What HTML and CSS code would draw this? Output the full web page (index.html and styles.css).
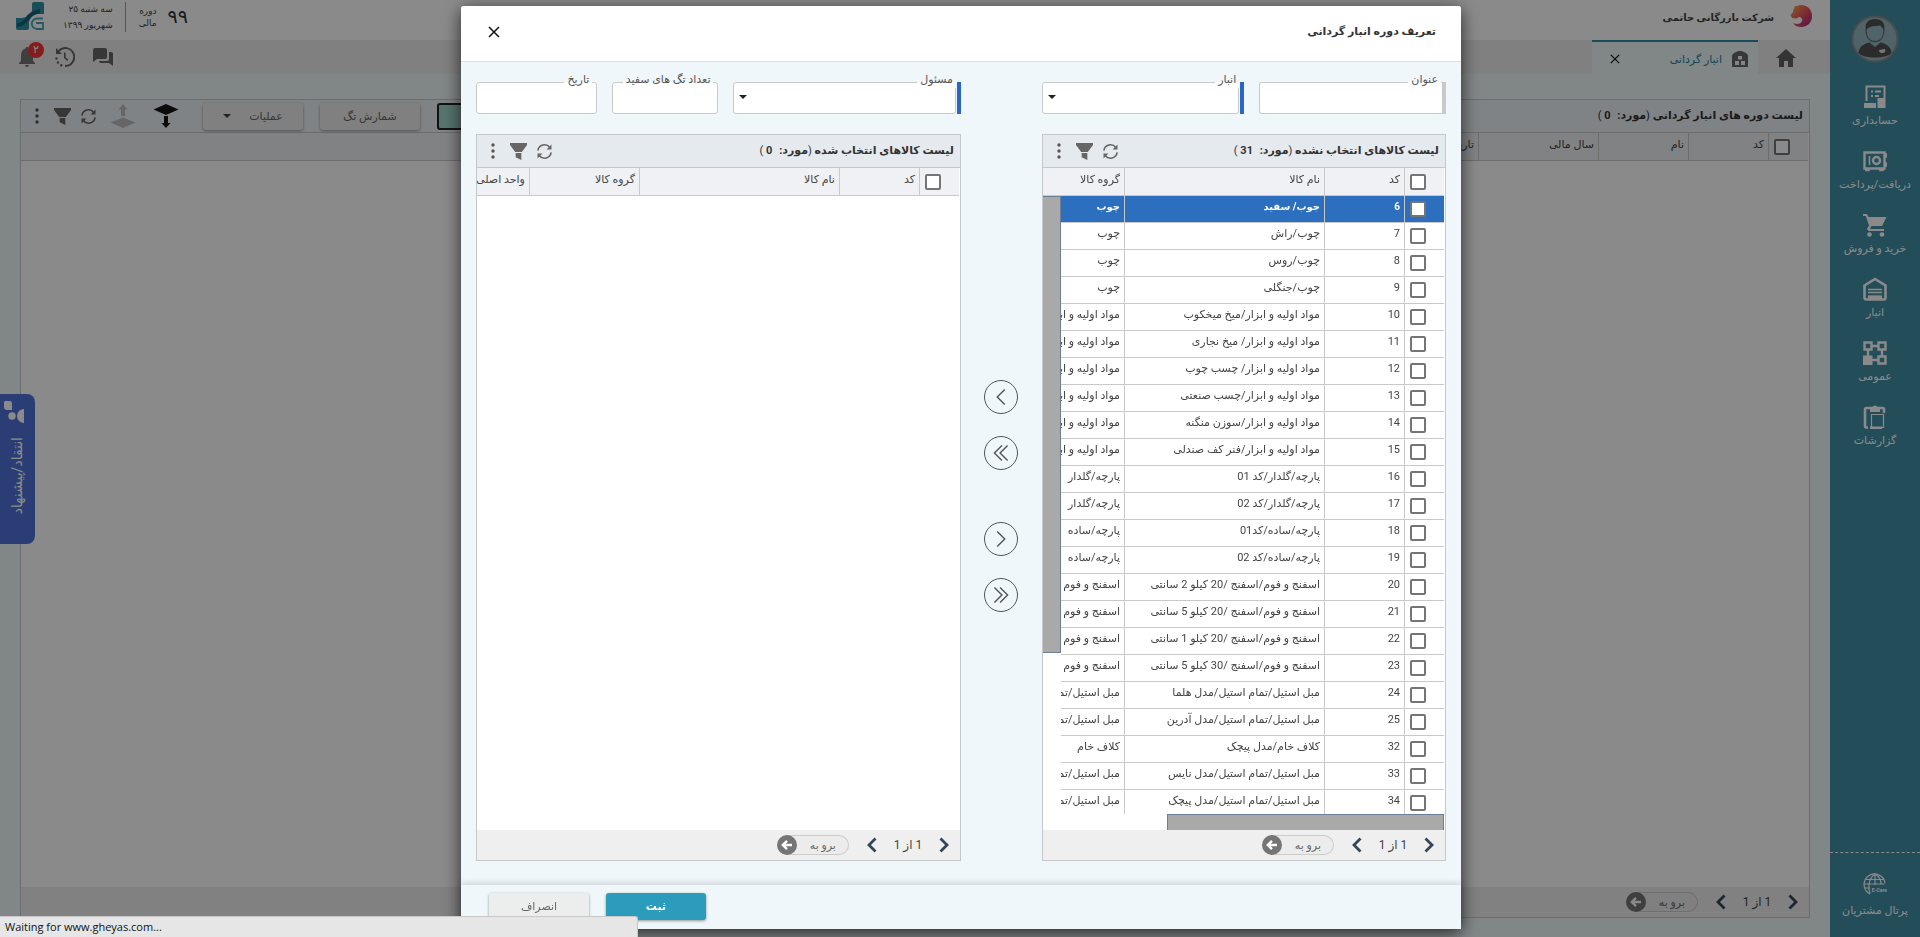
FILE: index.html
```html
<!DOCTYPE html>
<html lang="fa" dir="rtl">
<head>
<meta charset="utf-8">
<title>انبار گردانی</title>
<link rel="stylesheet" href="styles.css">
</head>
<body>
<svg class="defs" aria-hidden="true">
  <symbol id="close" viewBox="0 0 12 12"><path d="M1 1l10 10M11 1L1 11" fill="none" stroke="currentColor" stroke-width="1.5"/></symbol>
  <symbol id="refresh" viewBox="0 0 18 18"><path d="M2 8a7 7 0 0 1 12.6-3.2M16 10a7 7 0 0 1-12.6 3.2" fill="none" stroke="currentColor" stroke-width="1.7"/><path d="M16.4 1.6v5.2h-5.2zM1.6 16.4v-5.2h5.2z" fill="currentColor"/></symbol>
  <symbol id="funnel" viewBox="0 0 18 18"><path d="M0 0h18v2.200L12.500 9.500h-7L0 2.200zM6 10.500h6V18l-6-3z" fill="currentColor"/></symbol>
  <symbol id="dots" viewBox="0 0 4 18"><circle cx="2" cy="3" r="1.700"/><circle cx="2" cy="9" r="1.700"/><circle cx="2" cy="15" r="1.700"/></symbol>
  <symbol id="next" viewBox="0 0 10 16"><path d="M1.500 1.500L8 8l-6.500 6.500" fill="none" stroke="currentColor" stroke-width="2.800"/></symbol>
  <symbol id="prev" viewBox="0 0 10 16"><path d="M8.500 1.500L2 8l6.500 6.500" fill="none" stroke="currentColor" stroke-width="2.800"/></symbol>
  <symbol id="go" viewBox="0 0 20 20"><circle cx="10" cy="10" r="10" fill="#757575"/><path d="M15 10H6.500M10 5.800L5.800 10l4.200 4.200" fill="none" stroke="#fff" stroke-width="2.400"/></symbol>
  <symbol id="export" viewBox="0 0 26 26"><path d="M13 1l12.500 5.500L13 12 .5 6.500zM11 13h4v7h2.500L13 25l-4.500-5H11z" fill="currentColor"/></symbol>
  <symbol id="import" viewBox="0 0 26 26"><path d="M13 14.500l12.500 5L13 25 .5 19.500zM13 1l4.500 5.500H15V13h-4V6.500H8.500z" fill="currentColor"/></symbol>
</svg>

<div class="app">
  <nav class="sidebar">
    <svg class="avatar" viewBox="0 0 48 48"><circle cx="24" cy="24" r="22.500" fill="#94b8c0" stroke="#8c8c8c" stroke-width="2"/><path d="M7.500 38c1-7 5-9 11-10.500l5.500 4.500 5.500-4.500c6 1.500 10 3.500 11 10.500-3 3-9 4.500-16.500 4.500S10.500 41 7.500 38z" fill="#505050"/><path d="M15 14c0 8 3.500 12.500 9 12.500S33 22 33 14" fill="none" stroke="#6b6b6b" stroke-width="1.300"/><path d="M15 15c-1.500-7 2-11 9-11s10.500 4 9 11c-1.500-1-2-3.500-4-4.500-5 1-10-.5-14 4.500z" fill="#505050"/><path d="M28 35l6-1c1 3-1 4-3 4s-3-1-3-3z" fill="#ddd"/></svg>
    <a class="nav-item" href="#"><svg viewBox="0 0 24 24"><path d="M3.500 16V1.500h18V13M8 6.500h2m2 0h6M8 11h2m2 0h4" fill="none" stroke="currentColor" stroke-width="2"/><path d="M1 18h12v5H1zM14.500 13h8v10h-8z" fill="currentColor"/></svg>حسابداری</a>
    <a class="nav-item" href="#"><svg viewBox="0 0 24 24"><path d="M1.500 3.500h20v16h-20z" fill="none" stroke="currentColor" stroke-width="2.400"/><path d="M6.500 7v9M22 5h1.500v3H22zM22 14h1.500v3H22zM3 20h3v1.500H3zM17 20h3v1.500h-3z" fill="currentColor" stroke="currentColor" stroke-width="1.600"/><circle cx="13.500" cy="11.500" r="3.500" fill="none" stroke="currentColor" stroke-width="2.400"/></svg>دریافت/پرداخت</a>
    <a class="nav-item" href="#"><svg viewBox="0 0 24 24"><path d="M0 1h4l1.500 3H23.500L19 13H8.500L7 16h14v2H5.500L4 16l2-3.500L2.800 3H0z" fill="currentColor"/><circle cx="6.500" cy="21.500" r="2.300" fill="currentColor"/><circle cx="19" cy="21.500" r="2.300" fill="currentColor"/></svg>خرید و فروش</a>
    <a class="nav-item" href="#"><svg viewBox="0 0 24 24"><path d="M1.500 8.500L12 2l10.500 6.500v12a2 2 0 0 1-2 2h-17a2 2 0 0 1-2-2z" fill="none" stroke="currentColor" stroke-width="2.600"/><path d="M5 12.500h14M5 15.500h14M5 19.500h14" fill="none" stroke="currentColor" stroke-width="1.600"/><path d="M5 18.500h14V23H5z" fill="currentColor"/></svg>انبار</a>
    <a class="nav-item" href="#"><svg viewBox="0 0 24 24"><path d="M1.500 1.500h7v7h-7zM15.500 1.500h7v7h-7zM15.500 15.500h7v7h-7zM9 5h6M5 9v6M19 9v6M9 19h6" fill="none" stroke="currentColor" stroke-width="2.400"/><path d="M0 14.500h9.500V24H0z" fill="currentColor"/></svg>عمومی</a>
    <a class="nav-item" href="#"><svg viewBox="0 0 24 24"><path d="M5 22.500H3.500a1.500 1.500 0 0 1-1.500-1.500V4.500a1.500 1.500 0 0 1 1.500-1.500h16a1.500 1.500 0 0 1 1.500 1.500V8" fill="none" stroke="currentColor" stroke-width="2.600"/><path d="M8.500 9.500h12v13h-12z" fill="none" stroke="currentColor" stroke-width="1.200"/><path d="M7 3h2.500a2.500 2.500 0 0 1 5 0H17v4H7zM7 21.500h12v2.500H7z" fill="currentColor"/></svg>گزارشات</a>
    <a class="nav-item portal" href="#"><svg viewBox="0 0 24 24"><g fill="none" stroke="currentColor" stroke-width="1.200"><path d="M7 21A10.500 10.500 0 1 1 22 10"/><path d="M1.500 11h20M3 6.500h18M12 1v11M12 1C5 6 5 15 7 21M12 1c5 3 6 7 6 10M1.500 15H7"/></g><text x="24" y="19" class="tiny">E-Care</text></svg>پرتال مشتریان</a>
  </nav>

  <div class="main">
    <header class="topbar">
      <svg class="company-logo" viewBox="0 0 22 24"><defs><linearGradient id="g1" x1="0" y1="0" x2="1" y2="1"><stop offset="0" stop-color="#f6b552"/><stop offset=".45" stop-color="#ec5b5b"/><stop offset="1" stop-color="#a0208a"/></linearGradient></defs><path d="M5 2c2 .5 3-1 6-1 7 0 11 5 11 11 0 7-5 11-11 11-3 0-6-1-8-4 4 2 8 1 9-2 1-2-1-4-3-4l-3 1.500-4-.5L.5 11 3 8c0-2 1-4 2-6z" fill="url(#g1)"/></svg>
      <strong class="company">شرکت بازرگانی حاتمی</strong>
      <div class="period"><span class="year">۹۹</span><span class="small">دوره<br>مالی</span></div>
      <div class="date">سه شنبه ۲۵<br>شهریور ۱۳۹۹</div>
      <svg class="brand" viewBox="0 0 28 28"><path d="M16 2a2 2 0 0 1 2-2h8a2 2 0 0 1 2 2v10h-6c-5 0-9 5-9 9v5a2 2 0 0 1-2 2H2a2 2 0 0 1-2-2V16h5c6 0 11-4 11-8z" fill="#2f93a6"/><path d="M1 23c5 0 8-3 10-6s7-7 13-8" fill="none" stroke="#1c6576" stroke-width="4"/><path d="M27 16.500h-6a5 5 0 0 0 0 10.500h6v-6h-7" fill="none" stroke="#4aa3b3" stroke-width="1.800"/></svg>
    </header>
    <div class="tabbar">
      <a class="tab home" href="#" aria-label="خانه"><svg viewBox="0 0 20 18"><path d="M10 0l10 9h-3v9h-5v-6H8v6H3V9H0z" fill="#606060"/></svg></a>
      <div class="tab active"><svg viewBox="0 0 18 18"><path d="M1 6c0-3 6-5 8-5s8 2 8 5v11H1z" fill="#666"/><path d="M7 6h4v3.500H7zM4 11h4v4H4zM10 11h4v4h-4z" fill="#eff7fa"/></svg><span>انبار گردانی</span><button type="button" class="icon-btn tab-close" aria-label="بستن"><svg viewBox="0 0 12 12"><use href="#close"/></svg></button></div>
      <div class="tools">
        <button type="button" class="icon-btn" aria-label="پیام ها"><svg class="i20" viewBox="0 0 20 20"><path d="M2 1h10a2 2 0 0 1 2 2v7a2 2 0 0 1-2 2H4l-4 3V3a2 2 0 0 1 2-2zM16 5h2a2 2 0 0 1 2 2v12l-4-3H8a2 2 0 0 1-2-2h8a2 2 0 0 0 2-2z" fill="#666"/></svg></button>
        <button type="button" class="icon-btn" aria-label="تاریخچه"><svg class="i20" viewBox="0 0 20 20"><path d="M3.500 4A9 9 0 1 1 10 19" fill="none" stroke="#666" stroke-width="2"/><path d="M1 1v6h6zM9 5.500h1.600v4.700l2.800 2.600-1 1.200L9 11z" fill="#666"/><g fill="#666"><circle cx="1.500" cy="11.500" r="1.200"/><circle cx="3" cy="15.500" r="1.200"/><circle cx="6.300" cy="18.300" r="1.200"/></g></svg></button>
        <button type="button" class="icon-btn bell" aria-label="اعلان ها"><svg class="i20" viewBox="0 0 20 20"><path d="M10 0c1 0 1.500.6 1.500 1.600C15 2.500 16 6 16 9v5l2 2v1H2v-1l2-2V9c0-3 1-6.500 4.500-7.400C8.500.6 9 0 10 0zM8 18h4a2 2 0 0 1-4 0z" fill="#757575"/></svg><span class="badge">۲</span></button>
      </div>
    </div>
    <main class="workspace">
      <section class="panel">
        <div class="panel-head">
          <h2>لیست دوره های انبار گردانی <span class="thin">(</span>مورد: <span class="count">0</span> <span class="thin">)</span></h2>
          <button type="button" class="btn primary-dim" aria-label="جدید"></button>
          <button type="button" class="btn">شمارش تگ</button>
          <button type="button" class="btn drop">عملیات</button>
          <button type="button" class="icon-btn dark" aria-label="دریافت"><svg class="i26" viewBox="0 0 26 26"><use href="#export"/></svg></button>
          <button type="button" class="icon-btn faint" aria-label="ارسال"><svg class="i26" viewBox="0 0 26 26"><use href="#import"/></svg></button>
          <div class="head-icons">
            <button type="button" class="icon-btn" aria-label="بازخوانی"><svg class="i18" viewBox="0 0 18 18"><use href="#refresh"/></svg></button>
            <button type="button" class="icon-btn" aria-label="فیلتر"><svg class="i18" viewBox="0 0 18 18"><use href="#funnel"/></svg></button>
            <button type="button" class="icon-btn" aria-label="بیشتر"><svg class="idots" viewBox="0 0 4 18"><use href="#dots"/></svg></button>
          </div>
        </div>
        <div class="grid">
          <table>
            <colgroup><col class="c-check"><col class="c-code"><col class="c-90"><col class="c-120"><col class="c-120"><col></colgroup>
            <thead><tr><th><input type="checkbox" aria-label="انتخاب همه"></th><th>کد</th><th>نام</th><th>سال مالی</th><th>تاریخ شروع</th><th></th></tr></thead>
          </table>
        </div>
        <div class="pager">
          <button type="button" class="icon-btn" aria-label="بعدی"><svg class="chev" viewBox="0 0 10 16"><use href="#next"/></svg></button><span class="pages">1 از 1</span><button type="button" class="icon-btn" aria-label="قبلی"><svg class="chev" viewBox="0 0 10 16"><use href="#prev"/></svg></button>
          <div class="goto"><input type="text" placeholder="برو به" aria-label="برو به"><button type="button" class="icon-btn" aria-label="برو"><svg class="i20" viewBox="0 0 20 20"><use href="#go"/></svg></button></div>
        </div>
      </section>
    </main>
  </div>
  <button type="button" class="feedback"><svg viewBox="0 0 22 22"><path d="M2 0h5a2 2 0 0 1 2 2v7H4a3 3 0 0 1-3-3V1zM21 8v14a7 7 0 0 1 0-14z" fill="currentColor"/><circle cx="9" cy="15" r="3.700" fill="currentColor"/></svg><span>انتقاد/پیشنهاد</span></button>
</div>

<div class="overlay">
  <form class="modal" role="dialog" aria-labelledby="dlg-title">
    <header class="modal-head"><h1 id="dlg-title">تعریف دوره انبار گردانی</h1><button type="button" class="icon-btn" aria-label="بستن"><svg class="i12" viewBox="0 0 12 12"><use href="#close"/></svg></button></header>
    <div class="modal-body">
      <div class="fields fields-a">
        <div class="field"><label for="f-title">عنوان</label><input id="f-title" class="grey-bar" type="text"></div>
        <div class="field required"><label for="f-store">انبار</label><select id="f-store"><option></option></select></div>
      </div>
      <div class="fields fields-b">
        <div class="field required"><label for="f-resp">مسئول</label><select id="f-resp"><option></option></select></div>
        <div class="field"><label for="f-tags">تعداد تگ های سفید</label><input id="f-tags" type="text"></div>
        <div class="field"><label for="f-date">تاریخ</label><input id="f-date" type="text"></div>
      </div>

      <section class="panel source">
        <div class="panel-head">
          <h2>لیست کالاهای انتخاب نشده <span class="thin">(</span>مورد: <span class="count">31</span> <span class="thin">)</span></h2>
          <div class="head-icons">
            <button type="button" class="icon-btn" aria-label="بازخوانی"><svg class="i18" viewBox="0 0 18 18"><use href="#refresh"/></svg></button>
            <button type="button" class="icon-btn" aria-label="فیلتر"><svg class="i18" viewBox="0 0 18 18"><use href="#funnel"/></svg></button>
            <button type="button" class="icon-btn" aria-label="بیشتر"><svg class="idots" viewBox="0 0 4 18"><use href="#dots"/></svg></button>
          </div>
        </div>
        <div class="grid">
          <table>
            <colgroup><col class="c-check"><col class="c-code"><col class="c-name"><col></colgroup>
            <thead><tr><th><input type="checkbox" aria-label="انتخاب همه"></th><th>کد</th><th>نام کالا</th><th>گروه کالا</th></tr></thead>
            <tbody>
              <tr class="selected"><td><input type="checkbox" aria-label="6"></td><td>6</td><td>جوب/ سفید</td><td>چوب</td></tr>
              <tr><td><input type="checkbox" aria-label="7"></td><td>7</td><td>چوب/راش</td><td>چوب</td></tr>
              <tr><td><input type="checkbox" aria-label="8"></td><td>8</td><td>چوب/روس</td><td>چوب</td></tr>
              <tr><td><input type="checkbox" aria-label="9"></td><td>9</td><td>چوب/جنگلی</td><td>چوب</td></tr>
              <tr><td><input type="checkbox" aria-label="10"></td><td>10</td><td>مواد اولیه و ابزار/میخ میخکوب</td><td>مواد اولیه و ابزار</td></tr>
              <tr><td><input type="checkbox" aria-label="11"></td><td>11</td><td>مواد اولیه و ابزار/ میخ نجاری</td><td>مواد اولیه و ابزار</td></tr>
              <tr><td><input type="checkbox" aria-label="12"></td><td>12</td><td>مواد اولیه و ابزار/ چسب چوب</td><td>مواد اولیه و ابزار</td></tr>
              <tr><td><input type="checkbox" aria-label="13"></td><td>13</td><td>مواد اولیه و ابزار/چسب صنعتی</td><td>مواد اولیه و ابزار</td></tr>
              <tr><td><input type="checkbox" aria-label="14"></td><td>14</td><td>مواد اولیه و ابزار/سوزن منگنه</td><td>مواد اولیه و ابزار</td></tr>
              <tr><td><input type="checkbox" aria-label="15"></td><td>15</td><td>مواد اولیه و ابزار/فنر کف صندلی</td><td>مواد اولیه و ابزار</td></tr>
              <tr><td><input type="checkbox" aria-label="16"></td><td>16</td><td>پارچه/گلدار/کد 01</td><td>پارچه/گلدار</td></tr>
              <tr><td><input type="checkbox" aria-label="17"></td><td>17</td><td>پارچه/گلدار/کد 02</td><td>پارچه/گلدار</td></tr>
              <tr><td><input type="checkbox" aria-label="18"></td><td>18</td><td>پارچه/ساده/کد01</td><td>پارچه/ساده</td></tr>
              <tr><td><input type="checkbox" aria-label="19"></td><td>19</td><td>پارچه/ساده/کد 02</td><td>پارچه/ساده</td></tr>
              <tr><td><input type="checkbox" aria-label="20"></td><td>20</td><td>اسفنج و فوم/اسفنج /20 کیلو 2 سانتی</td><td>اسفنج و فوم /اسفنج</td></tr>
              <tr><td><input type="checkbox" aria-label="21"></td><td>21</td><td>اسفنج و فوم/اسفنج /20 کیلو 5 سانتی</td><td>اسفنج و فوم /اسفنج</td></tr>
              <tr><td><input type="checkbox" aria-label="22"></td><td>22</td><td>اسفنج و فوم/اسفنج /20 کیلو 1 سانتی</td><td>اسفنج و فوم /اسفنج</td></tr>
              <tr><td><input type="checkbox" aria-label="23"></td><td>23</td><td>اسفنج و فوم/اسفنج /30 کیلو 5 سانتی</td><td>اسفنج و فوم /اسفنج</td></tr>
              <tr><td><input type="checkbox" aria-label="24"></td><td>24</td><td>مبل استیل/تمام استیل/مدل هلما</td><td>مبل استیل/تمام استیل</td></tr>
              <tr><td><input type="checkbox" aria-label="25"></td><td>25</td><td>مبل استیل/تمام استیل/مدل آدرین</td><td>مبل استیل/تمام استیل</td></tr>
              <tr><td><input type="checkbox" aria-label="32"></td><td>32</td><td>کلاف خام/مدل پیچک</td><td>کلاف خام</td></tr>
              <tr><td><input type="checkbox" aria-label="33"></td><td>33</td><td>مبل استیل/تمام استیل/مدل نایس</td><td>مبل استیل/تمام استیل</td></tr>
              <tr><td><input type="checkbox" aria-label="34"></td><td>34</td><td>مبل استیل/تمام استیل/مدل پیچک</td><td>مبل استیل/تمام استیل</td></tr>
            </tbody>
          </table>
          <div class="v-track"><div class="v-thumb"></div></div>
        </div>
        <div class="h-track"><div class="h-thumb"></div></div>
        <div class="pager">
          <button type="button" class="icon-btn" aria-label="بعدی"><svg class="chev" viewBox="0 0 10 16"><use href="#next"/></svg></button><span class="pages">1 از 1</span><button type="button" class="icon-btn" aria-label="قبلی"><svg class="chev" viewBox="0 0 10 16"><use href="#prev"/></svg></button>
          <div class="goto"><input type="text" placeholder="برو به" aria-label="برو به"><button type="button" class="icon-btn" aria-label="برو"><svg class="i20" viewBox="0 0 20 20"><use href="#go"/></svg></button></div>
        </div>
      </section>

      <div class="transfer">
        <button type="button" aria-label="انتقال"><svg viewBox="0 0 34 34"><path d="M21 9l-8 8 8 8"/></svg></button>
        <button type="button" aria-label="انتقال همه"><svg viewBox="0 0 34 34"><path d="M18 9l-8 8 8 8M24 9l-8 8 8 8"/></svg></button>
        <button type="button" class="apart" aria-label="بازگشت"><svg viewBox="0 0 34 34"><path d="M13 9l8 8-8 8"/></svg></button>
        <button type="button" aria-label="بازگشت همه"><svg viewBox="0 0 34 34"><path d="M10 9l8 8-8 8M16 9l8 8-8 8"/></svg></button>
      </div>

      <section class="panel chosen">
        <div class="panel-head">
          <h2>لیست کالاهای انتخاب شده <span class="thin">(</span>مورد: <span class="count">0</span> <span class="thin">)</span></h2>
          <div class="head-icons">
            <button type="button" class="icon-btn" aria-label="بازخوانی"><svg class="i18" viewBox="0 0 18 18"><use href="#refresh"/></svg></button>
            <button type="button" class="icon-btn" aria-label="فیلتر"><svg class="i18" viewBox="0 0 18 18"><use href="#funnel"/></svg></button>
            <button type="button" class="icon-btn" aria-label="بیشتر"><svg class="idots" viewBox="0 0 4 18"><use href="#dots"/></svg></button>
          </div>
        </div>
        <div class="grid">
          <table>
            <colgroup><col class="c-check"><col class="c-code"><col class="c-name"><col class="c-110"><col></colgroup>
            <thead><tr><th><input type="checkbox" aria-label="انتخاب همه"></th><th>کد</th><th>نام کالا</th><th>گروه کالا</th><th>واحد اصلی</th></tr></thead>
          </table>
        </div>
        <div class="pager">
          <button type="button" class="icon-btn" aria-label="بعدی"><svg class="chev" viewBox="0 0 10 16"><use href="#next"/></svg></button><span class="pages">1 از 1</span><button type="button" class="icon-btn" aria-label="قبلی"><svg class="chev" viewBox="0 0 10 16"><use href="#prev"/></svg></button>
          <div class="goto"><input type="text" placeholder="برو به" aria-label="برو به"><button type="button" class="icon-btn" aria-label="برو"><svg class="i20" viewBox="0 0 20 20"><use href="#go"/></svg></button></div>
        </div>
      </section>
    </div>
    <footer class="modal-foot"><button type="submit" class="btn submit">ثبت</button><button type="button" class="btn cancel">انصراف</button></footer>
  </form>
</div>
<div class="status" dir="ltr">Waiting for www.gheyas.com...</div>
</body>
</html>
```
FILE: styles.css
```css
* { box-sizing: border-box; }
html, body { height: 100%; margin: 0; }
body, button, input, select {
  font-family: Roboto, "DejaVu Sans", sans-serif;
  font-size: 11px;
  color: #444;
}
body { overflow: hidden; background: #eff7fa; }
.defs { position: absolute; width: 0; height: 0; }
svg { display: block; flex: none; }
a { color: inherit; text-decoration: none; }
h1, h2 { margin: 0; }
button { cursor: pointer; }
.icon-btn { border: 0; background: none; padding: 0; color: #666; fill: #555; }
.i12 { width: 12px; height: 12px; color: #111; }
.i18 { width: 17px; height: 17px; }
.i20 { width: 20px; height: 20px; }
.i26 { width: 26px; height: 26px; }
.idots { width: 4px; height: 18px; }
.dark { color: #151515; margin-right: 7px; }
.faint { color: #bdbdbd; }

.app { display: flex; height: 100vh; }
.main { flex: 1; min-width: 0; display: flex; flex-direction: column; }

.sidebar {
  width: 90px;
  display: flex;
  flex-direction: column;
  align-items: center;
  background: #438fa7;
  color: #fff;
  padding-top: 15px;
}
.avatar { width: 48px; height: 48px; margin-bottom: 22px; }
.nav-item {
  display: flex;
  flex-direction: column;
  align-items: center;
  gap: 4px;
  width: 100%;
  height: 64px;
  line-height: 16px;
  white-space: nowrap;
}
.nav-item svg { width: 24px; height: 24px; }
.tiny { font-size: 5px; fill: #fff; font-weight: bold; }
.portal {
  height: 85px;
  margin-top: auto;
  padding-top: 20px;
  gap: 6px;
  border-top: 1px dashed #fff;
}

.topbar { height: 40px; display: flex; align-items: center; background: #fff; padding: 0 18px 0 16px; }
.company-logo { width: 22px; height: 24px; margin-bottom: 8px; }
.company { font-size: 10px; margin: 0 16px 6px auto; }
.period { display: flex; align-items: center; gap: 11px; height: 30px; margin-bottom: 6px; padding-left: 13px; border-left: 1px solid #999; }
.year { font-size: 19px; color: #333; line-height: 30px; }
.small { font-size: 9px; line-height: 12px; }
.date { margin: 0 12px 6px 19px; font-size: 9px; line-height: 16px; white-space: nowrap; }
.brand { width: 28px; height: 28px; margin-bottom: 8px; }

.tabbar { height: 34px; display: flex; background: #ededed; }
.tab { display: flex; align-items: center; }
.tab.home { width: 72px; justify-content: center; padding: 2px 16px 0 0; }
.tab.home svg { width: 20px; height: 18px; }
.tab.active { width: 166px; padding: 2px 9px 0 18px; gap: 9px; border-top: 2px solid #2b8ba5; background: #eff7fa; color: #2b7f99; white-space: nowrap; }
.tab.active svg { width: 18px; height: 18px; }
.tab-close { margin-right: auto; }
.tab.active .tab-close svg { width: 10px; height: 10px; color: #111; }
.tools { margin-right: auto; display: flex; align-items: center; gap: 18px; padding-left: 17px; }
.bell { position: relative; }
.badge { position: absolute; top: -5px; left: 11px; width: 16px; height: 16px; border-radius: 50%; background: #f23535; color: #fff; font-size: 11px; line-height: 16px; text-align: center; }

.workspace { flex: 1; min-height: 0; display: flex; padding: 25px 20px 19px; }
.workspace .panel { flex: 1; }

.panel { display: flex; flex-direction: column; min-width: 0; min-height: 0; border: 1px solid #c4c8cb; background: #fff; }
.panel-head { display: flex; align-items: center; height: 33px; flex: none; background: #e5eaee; padding: 0 6px 0 14px; border-bottom: 1px solid #c4c8cb; }
.workspace .panel-head { background: #edf2f5; gap: 17px; }
.workspace .head-icons { margin-right: -4px; }
.panel-head h2 { font-size: 11px; line-height: 16px; color: #333; margin-left: auto; white-space: nowrap; }
.thin { font-weight: normal; }
.count { margin-right: 4px; }
.head-icons { display: flex; align-items: center; gap: 9px; }
.head-icons .icon-btn:last-child { margin-right: 6px; }

.btn { height: 27px; min-width: 100px; border: 0; border-radius: 3px; background: #eceded; box-shadow: 0 1px 3px rgba(0, 0, 0, .4); color: #666; }
.primary-dim { border: 2px solid #222; background: #a0d6cb; box-shadow: none; }
.drop { display: flex; align-items: center; justify-content: center; gap: 18px; }
.drop::after { content: ""; border: 4px solid transparent; border-top-color: #444; border-bottom: 0; }

.grid { position: relative; flex: 1; min-height: 0; overflow: hidden; padding-right: 1px; }
.grid table { width: 100%; table-layout: fixed; border-collapse: separate; border-spacing: 0; }
.source table { width: 460px; }
.c-check { width: 40px; }
.c-code { width: 80px; }
.c-90 { width: 90px; }
.c-110 { width: 110px; }
.c-120 { width: 120px; }
.c-name { width: 200px; }
th, td { text-align: right; font-weight: normal; white-space: nowrap; overflow: hidden; padding: 0 4px; border-left: 1px solid #c9c9c9; border-bottom: 1px solid #c9c9c9; }
th { height: 28px; background: #eff1f4; line-height: 16px; padding-bottom: 3px; }
.chosen th:last-child, .workspace th:last-child { border-left: 0; padding-left: 0; }
td { height: 27px; background: #fff; line-height: 16px; padding-bottom: 4px; }
.panel th:first-child, .panel td:first-child { padding: 0 18px 0 0; }
.selected td { background: #2b6fbe; color: #fff; font-weight: bold; font-size: 10px; }
input[type="checkbox"] { appearance: none; display: block; width: 16px; height: 16px; margin: 0; border: 2px solid #757575; border-radius: 2px; background: #fff; }
.v-track { position: absolute; top: 28px; bottom: 0; left: 0; width: 18px; background: #fff; }
.v-thumb { height: 74%; background: #a9a9a9; border: 1px solid #6b7f99; border-left: 0; }
.h-track { flex: none; height: 16px; padding-right: 1px; }
.h-thumb { width: 69%; height: 16px; background: #a9a9a9; border: 1px solid #6b7f99; border-bottom: 0; }

.pager { flex: none; height: 30px; display: flex; align-items: center; background: #efefef; padding-right: 11px; }
.pager .icon-btn { color: #34465c; }
.chev { width: 10px; height: 16px; }
.pages { width: 62px; text-align: center; font-size: 12px; }
.goto { display: flex; align-items: center; margin-right: 18px; }
.goto input { width: 62px; height: 20px; margin-left: -10px; padding: 0 12px 0 8px; border: 1px solid #ccc; border-left: 0; border-radius: 0 10px 10px 0; background: #ececec; outline: 0; }
.goto input::placeholder { color: #666; opacity: 1; }
.goto .icon-btn { z-index: 1; }

.feedback { position: fixed; left: 0; top: 394px; width: 35px; height: 150px; padding: 7px 3px; border: 0; border-radius: 0 8px 8px 0; background: #4e74d8; color: #fff; display: flex; flex-direction: column; align-items: flex-end; gap: 14px; }
.feedback svg { width: 22px; height: 22px; }
.feedback span { writing-mode: vertical-rl; transform: rotate(180deg); font-size: 14px; line-height: 28px; color: #fff; white-space: nowrap; }

.overlay { position: fixed; inset: 0; display: flex; justify-content: center; padding: 6px 0 8px 2px; background: rgba(0, 0, 0, .46); z-index: 5; }
.modal { width: 1000px; max-width: 100%; display: flex; flex-direction: column; background: #eff7fa; border-radius: 3px 3px 0 0; box-shadow: 0 4px 18px rgba(0, 0, 0, .7); }
.modal-head { flex: none; display: flex; align-items: center; justify-content: space-between; height: 56px; padding: 0 25px 4px 27px; background: #fff; border-bottom: 1px solid #dde1e3; border-radius: 3px 3px 0 0; }
.modal-head h1 { font-size: 11px; line-height: 20px; color: #333; }
.modal-body { flex: 1; min-height: 0; display: grid; grid-template-columns: 5fr 81px 6fr; grid-template-rows: 32px 1fr; row-gap: 20px; padding: 20px 15px 24px; }
.fields { display: grid; gap: 15px; }
.fields-a { grid-template-columns: 12fr 13fr; }
.fields-b { grid-column: 3; grid-template-columns: 15fr 7fr 8fr; }
.field { position: relative; display: flex; }
.field input, .field select { width: 100%; min-width: 0; height: 32px; appearance: none; border: 1px solid #c9c9c9; border-radius: 3px; background: #fff; padding: 0 6px; outline: 0; }
.field .grey-bar { border-right: 4px solid #c9c9c9; border-radius: 3px 0 0 3px; }
.field label { position: absolute; top: -10px; right: 5px; padding: 0 3px; font-size: 10px; line-height: 16px; color: #555; background: linear-gradient(#eff7fa 10px, #fff 10px); white-space: nowrap; }
.required { border-right: 4px solid #2a66c8; padding-right: 1px; }
.field.required label { right: 1px; }
.required::after { content: ""; position: absolute; left: 6px; top: 13px; border: 4px solid transparent; border-top-color: #222; border-bottom: 0; }
.field:not(.required) label { font-size: 11px; }
.required label { font-size: 11px; }

.transfer { display: flex; flex-direction: column; align-items: center; justify-content: center; gap: 22px; padding-bottom: 3px; }
.transfer button { width: 34px; height: 34px; padding: 0; border: 1px solid #555; border-radius: 50%; background: none; }
.transfer svg { width: 32px; height: 32px; fill: none; stroke: #555; stroke-width: 1.500; }
.transfer .apart { margin-top: 30px; }

.modal-foot { flex: none; display: flex; justify-content: flex-end; gap: 17px; height: 44px; padding: 8px 0 0 28px; box-shadow: 0 -2px 6px rgba(0, 0, 0, .15); }
.submit { background: #2c9cbc; color: #fff; font-weight: bold; }

.status { position: fixed; left: 0; bottom: 0; z-index: 6; width: 638px; max-width: 100%; height: 21px; padding: 0 5px; border: 1px solid #c8c8c8; border-width: 1px 1px 0 0; border-radius: 0 3px 0 0; background: #e6e6e6; font-family: "Open Sans", sans-serif; font-size: 11px; line-height: 20px; color: #111; }
```
